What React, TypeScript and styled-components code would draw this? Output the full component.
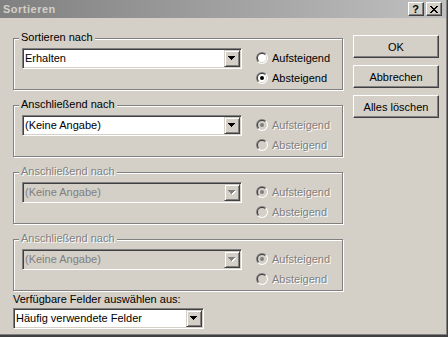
import React from "react";
import styled, { createGlobalStyle } from "styled-components";

const Global = createGlobalStyle`
  html, body { margin: 0; padding: 0; background: #d4d0c8; }
  #root { width: 448px; height: 337px; }
`;

const FACE = "#d4d0c8";
const SHADOW = "#808080";
const DARK = "#404040";

const Window = styled.div`
  width: 448px;
  height: 337px;
  box-sizing: border-box;
  border-right: 1px solid ${DARK};
  border-bottom: 2px solid ${DARK};
  overflow: hidden;
`;

const Frame = styled.div`
  height: 100%;
  box-sizing: border-box;
  border-right: 1px solid ${SHADOW};
  border-bottom: 1px solid ${SHADOW};
  background: ${FACE};
  display: flex;
  flex-direction: column;
  font-family: "Liberation Sans", Arial, sans-serif;
  font-size: 11px;
  color: #000;
`;

const TitleBar = styled.div`
  height: 18px;
  flex: none;
  display: flex;
  align-items: center;
  padding: 0 4px 0 3px;
  background: linear-gradient(to right, #808080, #c0c0c0);
`;

const Title = styled.div`
  flex: 1;
  font-weight: bold;
  font-size: 11px;
  letter-spacing: 0.5px;
  color: ${FACE};
  line-height: 18px;
`;

const CapButtons = styled.div`
  display: flex;
  gap: 2px;
`;

const CapButton = styled.div`
  width: 16px;
  height: 14px;
  box-sizing: border-box;
  background: ${FACE};
  border-top: 1px solid #fff;
  border-left: 1px solid #fff;
  border-right: 1px solid ${DARK};
  border-bottom: 1px solid ${DARK};
  box-shadow: inset -1px -1px 0 ${SHADOW};
  display: flex;
  align-items: center;
  justify-content: center;
  font-weight: bold;
  font-size: 11px;
  line-height: 12px;
  padding-right: 1px;
`;

const Body = styled.div`
  flex: 1;
  display: flex;
  padding: 17px 0 0 13px;
`;

const LeftCol = styled.div`
  width: 330px;
  padding-top: 3px;
  display: flex;
  flex-direction: column;
`;

const GroupStack = styled.div`
  display: flex;
  flex-direction: column;
  gap: 15px;
  margin-bottom: 1px;
`;

const Group = styled.div`
  position: relative;
  height: 52px;
  box-sizing: border-box;
  border: 1px solid ${SHADOW};
  box-shadow: inset 1px 1px 0 #fff, 1px 1px 0 #fff;
  padding: 9px 0 0 8px;
  display: flex;
  align-items: flex-start;
`;

const GroupLabel = styled.span<{ $disabled?: boolean }>`
  position: absolute;
  top: -8px;
  left: 5px;
  padding: 0 2px;
  line-height: 13px;
  background: ${FACE};
  color: ${(p) => (p.$disabled ? SHADOW : "#000")};
  text-shadow: ${(p) => (p.$disabled ? "1px 1px 0 #fff" : "none")};
  white-space: nowrap;
`;

const ComboBox = styled.div<{ $width: number; $disabled?: boolean }>`
  width: ${(p) => p.$width}px;
  height: 21px;
  flex: none;
  box-sizing: border-box;
  border-top: 1px solid ${SHADOW};
  border-left: 1px solid ${SHADOW};
  border-right: 1px solid #fff;
  border-bottom: 1px solid #fff;
  box-shadow: inset 1px 1px 0 ${DARK}, inset -1px -1px 0 ${FACE};
  padding: 1px;
  background: ${(p) => (p.$disabled ? FACE : "#fff")};
  display: flex;
  align-items: stretch;
`;

const ComboText = styled.div<{ $disabled?: boolean }>`
  flex: 1;
  padding-left: 1px;
  line-height: 17px;
  color: ${(p) => (p.$disabled ? SHADOW : "#000")};
  white-space: nowrap;
  overflow: hidden;
`;

const DropButton = styled.div`
  width: 16px;
  box-sizing: border-box;
  background: ${FACE};
  border-top: 1px solid ${FACE};
  border-left: 1px solid ${FACE};
  border-right: 1px solid ${DARK};
  border-bottom: 1px solid ${DARK};
  box-shadow: inset 1px 1px 0 #fff, inset -1px -1px 0 ${SHADOW};
  display: flex;
  align-items: center;
  justify-content: center;
`;

const RadioList = styled.div`
  margin-left: 14px;
  display: flex;
  flex-direction: column;
`;

const RadioRow = styled.div<{ $disabled?: boolean }>`
  height: 20px;
  display: flex;
  align-items: center;
  gap: 4px;
  color: ${(p) => (p.$disabled ? SHADOW : "#000")};
  text-shadow: ${(p) => (p.$disabled ? "1px 1px 0 #fff" : "none")};
  white-space: nowrap;
`;

const FieldLabel = styled.div`
  line-height: 13px;
  padding-top: 1px;
  white-space: nowrap;
`;

const BottomCombo = styled.div`
  margin-top: 2px;
`;

const RightCol = styled.div`
  margin-left: 10px;
  display: flex;
  flex-direction: column;
  gap: 7px;
`;

const PushButton = styled.div`
  width: 86px;
  height: 23px;
  box-sizing: border-box;
  background: ${FACE};
  border-top: 1px solid #fff;
  border-left: 1px solid #fff;
  border-right: 1px solid ${DARK};
  border-bottom: 1px solid ${DARK};
  box-shadow: inset -1px -1px 0 ${SHADOW};
  display: flex;
  align-items: center;
  justify-content: center;
  white-space: nowrap;
`;

function Arrow({ disabled }: { disabled?: boolean }) {
  const rows = [
    [0, 7],
    [1, 5],
    [2, 3],
    [3, 1],
  ];
  return (
    <svg width="8" height="5" viewBox="0 0 8 5" shapeRendering="crispEdges">
      {disabled &&
        rows.map(([x, w], i) => (
          <rect key={"s" + i} x={x + 1} y={i + 1} width={w} height={1} fill="#fff" />
        ))}
      {rows.map(([x, w], i) => (
        <rect key={i} x={x} y={i} width={w} height={1} fill={disabled ? SHADOW : "#000"} />
      ))}
    </svg>
  );
}

function CloseGlyph() {
  const pat = ["XX....XX", ".XX..XX.", "..XXXX..", "...XX...", "..XXXX..", ".XX..XX.", "XX....XX"];
  return (
    <svg width="8" height="7" viewBox="0 0 8 7" shapeRendering="crispEdges">
      {pat.flatMap((row, y) =>
        row.split("").map((c, x) => (c === "X" ? <rect key={x + "-" + y} x={x} y={y} width={1} height={1} fill="#000" /> : null))
      )}
    </svg>
  );
}

function half(r: number, first: boolean) {
  const c = 6;
  const d = r * Math.SQRT1_2;
  const bl = `${c - d} ${c + d}`;
  const tr = `${c + d} ${c - d}`;
  return first ? `M${bl} A${r} ${r} 0 0 1 ${tr} Z` : `M${tr} A${r} ${r} 0 0 1 ${bl} Z`;
}

function RadioIcon({ checked, disabled }: { checked?: boolean; disabled?: boolean }) {
  return (
    <svg width="12" height="12" viewBox="0 0 12 12">
      <path d={half(6, true)} fill={SHADOW} />
      <path d={half(6, false)} fill="#fff" />
      <path d={half(5, true)} fill={DARK} />
      <path d={half(5, false)} fill={FACE} />
      <circle cx="6" cy="6" r="4" fill={disabled ? FACE : "#fff"} />
      {checked && <circle cx="6" cy="6" r="2" fill={disabled ? SHADOW : "#000"} />}
    </svg>
  );
}

function Combo({ value, width, disabled }: { value: string; width: number; disabled?: boolean }) {
  return (
    <ComboBox $width={width} $disabled={disabled}>
      <ComboText $disabled={disabled}>{value}</ComboText>
      <DropButton>
        <Arrow disabled={disabled} />
      </DropButton>
    </ComboBox>
  );
}

type GroupSpec = {
  label: string;
  value: string;
  labelDisabled?: boolean;
  comboDisabled?: boolean;
  radiosDisabled?: boolean;
  checked: "auf" | "ab";
};

const groups: GroupSpec[] = [
  { label: "Sortieren nach", value: "Erhalten", checked: "ab" },
  { label: "Anschließend nach", value: "(Keine Angabe)", radiosDisabled: true, checked: "auf" },
  {
    label: "Anschließend nach",
    value: "(Keine Angabe)",
    labelDisabled: true,
    comboDisabled: true,
    radiosDisabled: true,
    checked: "auf",
  },
  {
    label: "Anschließend nach",
    value: "(Keine Angabe)",
    labelDisabled: true,
    comboDisabled: true,
    radiosDisabled: true,
    checked: "auf",
  },
];

export default function App() {
  return (
    <>
      <Global />
      <Window>
        <Frame>
          <TitleBar>
            <Title>Sortieren</Title>
            <CapButtons>
              <CapButton>?</CapButton>
              <CapButton>
                <CloseGlyph />
              </CapButton>
            </CapButtons>
          </TitleBar>
          <Body>
            <LeftCol>
              <GroupStack>
                {groups.map((g, i) => (
                  <Group key={i}>
                    <GroupLabel $disabled={g.labelDisabled}>{g.label}</GroupLabel>
                    <Combo value={g.value} width={220} disabled={g.comboDisabled} />
                    <RadioList>
                      <RadioRow $disabled={g.radiosDisabled}>
                        <RadioIcon checked={g.checked === "auf"} disabled={g.radiosDisabled} />
                        Aufsteigend
                      </RadioRow>
                      <RadioRow $disabled={g.radiosDisabled}>
                        <RadioIcon checked={g.checked === "ab"} disabled={g.radiosDisabled} />
                        Absteigend
                      </RadioRow>
                    </RadioList>
                  </Group>
                ))}
              </GroupStack>
              <FieldLabel>Verfügbare Felder auswählen aus:</FieldLabel>
              <BottomCombo>
                <Combo value="Häufig verwendete Felder" width={191} />
              </BottomCombo>
            </LeftCol>
            <RightCol>
              <PushButton>OK</PushButton>
              <PushButton>Abbrechen</PushButton>
              <PushButton>Alles löschen</PushButton>
            </RightCol>
          </Body>
        </Frame>
      </Window>
    </>
  );
}
